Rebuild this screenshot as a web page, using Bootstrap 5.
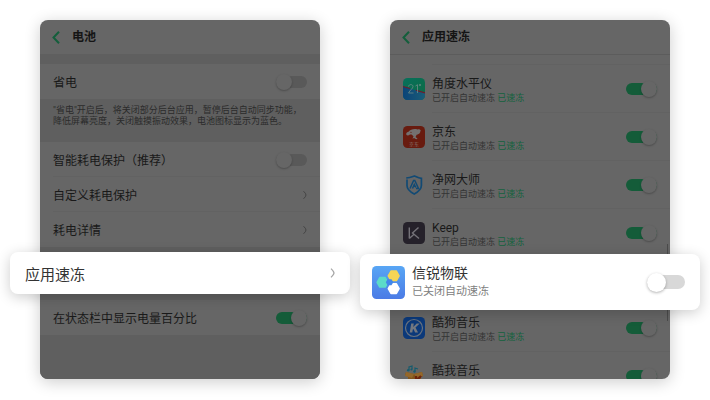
<!DOCTYPE html>
<html lang="zh-CN">
<head>
<meta charset="utf-8">
<meta name="viewport" content="width=device-width, initial-scale=1">
<title>应用速冻</title>
<link href="https://cdn.jsdelivr.net/npm/bootstrap@5.3.0/dist/css/bootstrap.min.css" rel="stylesheet">
<style>
  body { font-family: Roboto, "Noto Sans CJK SC", sans-serif; font-size: 12px; line-height: 16px; color: #191919; background: #fff; }
  .stage { padding: 20px 40px 21px; gap: 70px; }
  .phone { flex: 1 1 0; min-width: 0; background: #666; border-radius: 8px; box-shadow: 0 3px 16px rgba(0,0,0,.2); }
  .phone-head { height: 34px; padding: 0 12px; gap: 12px; }
  .phone-head h1 { font-size: 12px; line-height: 16px; font-weight: 700; color: #151515; }
  .back { width: 8px; height: 14px; }
  .back svg { flex: none; width: 8px; height: 13px; }
  .band { background: #5f5f5f; }
  .band-sm { height: 10px; }
  .note { padding: 6px 13px 15px; font-size: 9px; line-height: 11px; color: #2b2b2b; }
  .setting { min-height: 35px; padding: 0 13px; line-height: 17px; color: inherit; }
  .setting-name { padding-top: 3px; }
  .ruled { position: relative; }
  .ruled::after { content: ""; position: absolute; left: 13px; right: 0; bottom: 0; height: 1px; background: #626262; }
  .app-row.ruled::after, .list-top.ruled::after { left: 42px; }
  .arrow { width: 5px; height: 10px; }
  .callout { position: relative; z-index: 2; background: #fff; border-radius: 8px; box-shadow: 0 3px 14px rgba(0,0,0,.2); color: #333; }
  .callout-link { margin: 0 -30px; padding: 0 15px; min-height: 42px; font-size: 15px; line-height: 22px; }
  .callout-wrap { padding: 5px 0 6px; }
  .callout-app { margin: -3px -30px -6px; padding: 0 15px 0 12px; min-height: 56px; gap: 7px; }
  .callout-app .app-name { font-size: 14px; line-height: 20px; }
  .callout-app .app-state { font-size: 11px; line-height: 18px; color: #808080; }
  .app-row { height: 48px; padding: 0 13px; gap: 7px; }
  .app-row label { padding-top: 2px; }
  .app-row svg { width: 22px; height: 22px; }
  .app-name { font-size: 12px; line-height: 16px; }
  .app-state { font-size: 9px; line-height: 13px; color: #343434; }
  .frozen { color: #13623e; }
  .list-top { height: 11px; border-top: 1px solid #5c5c5c; }
  .tail { height: 27px; overflow: hidden; border-radius: 0 0 8px 8px; }
  .tail .app-name { padding-top: 9px; }
  .tail-fill { border-radius: 0 0 8px 8px; }
  .scroll-thumb { position: absolute; right: 2px; top: 224px; width: 1px; height: 77px; background: #4b4b4b; }
  .toggle { appearance: none; display: flex; align-items: center; width: 31px; height: 12px; border-radius: 6px; background: #595959; }
  .toggle::before { content: ""; flex: none; width: 16px; height: 16px; border-radius: 50%; background: #666; box-shadow: 0 1px 2px rgba(0,0,0,.25); }
  .toggle:checked { justify-content: flex-end; background: #145c39; }
  .toggle-lg { width: 38px; height: 14px; border-radius: 7px; background: #d8d8d8; }
  .toggle-lg::before { width: 19px; height: 19px; background: #fff; box-shadow: 0 1px 3px rgba(0,0,0,.3); }
</style>
</head>
<body>
<main class="stage d-flex align-items-stretch">

  <section class="phone d-flex flex-column" aria-label="电池">
    <header class="phone-head d-flex align-items-center">
      <button type="button" class="back btn p-0 border-0 d-flex align-items-center" aria-label="返回"><svg viewBox="0 0 8 13" fill="none" stroke="#145f3c" stroke-width="2"><path d="M7 .7 1.500 6.500 7 12.300"/></svg></button>
      <h1 class="m-0">电池</h1>
    </header>
    <div class="band band-sm"></div>
    <div class="setting d-flex align-items-center justify-content-between">
      <label class="setting-name" for="save">省电</label><input class="toggle m-0" type="checkbox" role="switch" id="save">
    </div>
    <p class="band note m-0">"省电"开启后，将关闭部分后台应用，暂停后台自动同步功能，降低屏幕亮度，关闭触摸振动效果，电池图标显示为蓝色。</p>
    <div class="setting ruled d-flex align-items-center justify-content-between">
      <label class="setting-name" for="smart">智能耗电保护（推荐）</label><input class="toggle m-0" type="checkbox" role="switch" id="smart">
    </div>
    <a href="#" class="setting ruled d-flex align-items-center justify-content-between text-decoration-none"><span class="setting-name">自定义耗电保护</span>
      <svg class="arrow" viewBox="0 0 5 10" fill="none" stroke="#444"><path d="M1.500 1.200Q4 3.500 4 5T1.500 8.800"/></svg></a>
    <a href="#" class="setting d-flex align-items-center justify-content-between text-decoration-none"><span class="setting-name">耗电详情</span>
      <svg class="arrow" viewBox="0 0 5 10" fill="none" stroke="#444"><path d="M1.500 1.200Q4 3.500 4 5T1.500 8.800"/></svg></a>
    <div class="band callout-wrap">
      <a href="#" class="callout callout-link d-flex align-items-center justify-content-between text-decoration-none"><span class="pt-1">应用速冻</span>
        <svg class="arrow" viewBox="0 0 5 10" fill="none" stroke="#a5a5a5" stroke-width="1.200"><path d="M1 .6Q4 3.500 4 5T1 9.400"/></svg></a>
    </div>
    <div class="setting d-flex align-items-center justify-content-between">
      <label class="setting-name" for="percent">在状态栏中显示电量百分比</label><input class="toggle m-0" type="checkbox" role="switch" id="percent" checked>
    </div>
    <div class="band tail-fill flex-grow-1"></div>
  </section>

  <section class="phone position-relative" aria-label="应用速冻">
    <header class="phone-head d-flex align-items-center">
      <button type="button" class="back btn p-0 border-0 d-flex align-items-center" aria-label="返回"><svg viewBox="0 0 8 13" fill="none" stroke="#145f3c" stroke-width="2"><path d="M7 .7 1.500 6.500 7 12.300"/></svg></button>
      <h1 class="m-0">应用速冻</h1>
    </header>
    <div class="list-top ruled"></div>

    <div class="app-row ruled d-flex align-items-center">
      <svg viewBox="0 0 22 22"><defs><linearGradient id="lv" x2="1" y2="1"><stop stop-color="#08705c"/><stop offset="1" stop-color="#0c6b43"/></linearGradient><linearGradient id="lb" x2="1" y2="0"><stop stop-color="#0b4478"/><stop offset="1" stop-color="#1b5d78"/></linearGradient><clipPath id="lc"><rect width="22" height="22" rx="4.5"/></clipPath></defs><g clip-path="url(#lc)"><path fill="url(#lv)" d="M0 0h22v22H0z"/><path fill="url(#lb)" d="M0 8.5 22 15v7H0z"/><path d="m0 8.500 7 2M13 12.300l9 2.700" stroke="#73192b" stroke-width="1.200"/></g><g fill="none" stroke="#6d8b87" stroke-width=".8"><path d="M5.500 8.500C5.800 6 10 6 10 8.500c0 2-3 3.500-4.500 6.500h5M12.500 8l2-1.300V15"/><circle cx="17" cy="7" r=".7"/></g></svg>
      <label class="flex-grow-1" for="a1"><span class="app-name d-block">角度水平仪</span><span class="app-state d-block">已开启自动速冻 <span class="frozen">已速冻</span></span></label>
      <input class="toggle m-0" type="checkbox" role="switch" id="a1" checked>
    </div>

    <div class="app-row ruled d-flex align-items-center">
      <svg viewBox="0 0 22 22"><rect width="22" height="22" rx="4.500" fill="#681b0f"/><path fill="#747070" d="M3.500 9c-.8-1.500 0-2.500 2-3.200C7.500 3.500 11 2.500 14.500 3.500c1.500-.7 2.500-.3 3.200.7-.4 1-.4 1.600-.6 2.300-.8 1.500-2 2-3.500 2.300l-1 2.200 2 1.700-1.500.6-2-1.200-1.600.7 1-2.500-2-1.800-1.600-.1c-.9 1-2.400 1.400-3.400.6z"/><circle cx="8" cy="6.300" r=".6" fill="#681b0f"/><text x="11" y="19.500" font-size="5" text-anchor="middle" fill="#8a7774">京东</text></svg>
      <label class="flex-grow-1" for="a2"><span class="app-name d-block">京东</span><span class="app-state d-block">已开启自动速冻 <span class="frozen">已速冻</span></span></label>
      <input class="toggle m-0" type="checkbox" role="switch" id="a2" checked>
    </div>

    <div class="app-row ruled d-flex align-items-center">
      <svg viewBox="0 0 22 22" fill="none" stroke="#124a74" stroke-width="1.700"><path d="M4 5.500v6c0 4 3 6.200 7.200 8.500 4.200-2.300 7.200-4.500 7.200-8.500V4.300C14 4 13.500 2.500 11.200 2 9.500 2.500 8 3.500 3.200 4"/><path d="m7 14.500 3.600-8h1.200l3.700 8H13M9.500 14.500l1.800-4 1.500 3" stroke-width="1.500"/></svg>
      <label class="flex-grow-1" for="a3"><span class="app-name d-block">净网大师</span><span class="app-state d-block">已开启自动速冻 <span class="frozen">已速冻</span></span></label>
      <input class="toggle m-0" type="checkbox" role="switch" id="a3" checked>
    </div>

    <div class="app-row d-flex align-items-center">
      <svg viewBox="0 0 22 22"><rect width="22" height="22" rx="4.500" fill="#25212a"/><path d="M6.300 5.500v11M15.500 5.500 9.500 11l6.500 5.500M6.300 16.500l5-4.500" fill="none" stroke="#747278" stroke-width="1.400"/></svg>
      <label class="flex-grow-1" for="a4"><span class="app-name d-block">Keep</span><span class="app-state d-block">已开启自动速冻 <span class="frozen">已速冻</span></span></label>
      <input class="toggle m-0" type="checkbox" role="switch" id="a4" checked>
    </div>

    <div class="callout callout-app d-flex align-items-center">
      <svg width="33" height="33" viewBox="0 0 33 33"><defs><linearGradient id="xr" x2="0" y2="1"><stop stop-color="#58a6f5"/><stop offset="1" stop-color="#4b7be5"/></linearGradient></defs><rect width="33" height="33" rx="4.500" fill="url(#xr)"/><g stroke-linejoin="round" stroke-width="1.500"><path fill="#5bdbc9" stroke="#5bdbc9" d="M7.800 11.500h5.400l2.700 4.800-2.700 4.800H7.800l-2.700-4.800z"/><path fill="#f5d556" stroke="#f5d556" d="M19 5h5.400l2.700 4.800-2.700 4.800H19l-2.700-4.800z"/><path fill="#fff" stroke="#fff" d="M19 17.800h5.400l2.700 4.800-2.700 4.800H19l-2.700-4.800z"/></g><path fill="#4287ea" d="M15.500 13.300h4l1.800 3-1.800 3h-4l-1.700-3z"/></svg>
      <label class="flex-grow-1" for="a5"><span class="app-name d-block">信锐物联</span><span class="app-state d-block">已关闭自动速冻</span></label>
      <input class="toggle toggle-lg m-0" type="checkbox" role="switch" id="a5">
    </div>

    <div class="app-row ruled d-flex align-items-center">
      <svg viewBox="0 0 22 22"><rect width="22" height="22" rx="4.500" fill="#0b397a"/><circle cx="11" cy="11" r="8.500" fill="none" stroke="#68727f" stroke-width="1.200"/><path fill="#737880" d="M8.200 6.500h2.600l-.6 3.400 3.500-3.400h3L12.500 10.400l2.500 5.100h-2.900l-1.600-3.600-.7.600-.5 3H6.700z"/></svg>
      <label class="flex-grow-1" for="a6"><span class="app-name d-block">酷狗音乐</span><span class="app-state d-block">已开启自动速冻 <span class="frozen">已速冻</span></span></label>
      <input class="toggle m-0" type="checkbox" role="switch" id="a6" checked>
    </div>

    <div class="tail">
      <div class="app-row d-flex align-items-center">
        <svg viewBox="0 0 22 22"><path fill="#80551d" d="m3 7 8 2 8-2 1 4-2 1v9H5v-9L2 10z"/><path fill="#94672a" d="m3 7 8 2-2 4-7-2zM19 7l-8 2 2 3 7-1z"/><path d="M13 11v9M18 11l-4 4 4 4" stroke="#6d210c" stroke-width="2.200" fill="none"/><g fill="none" stroke="#165b6d" stroke-width="1.200"><path d="M6 5V2l3-1v3M12 6V3l3 1"/></g><g fill="#165b6d"><circle cx="5.300" cy="5.200" r="1.300"/><circle cx="8.500" cy="4.500" r="1.100"/><circle cx="11.500" cy="6.500" r="1.200"/></g></svg>
        <label class="flex-grow-1 align-self-start" for="a7"><span class="app-name d-block">酷我音乐</span></label>
        <input class="toggle m-0" type="checkbox" role="switch" id="a7" checked>
      </div>
    </div>
    <div class="scroll-thumb"></div>
  </section>

</main>
<script src="https://cdn.jsdelivr.net/npm/bootstrap@5.3.0/dist/js/bootstrap.bundle.min.js"></script>
</body>
</html>
